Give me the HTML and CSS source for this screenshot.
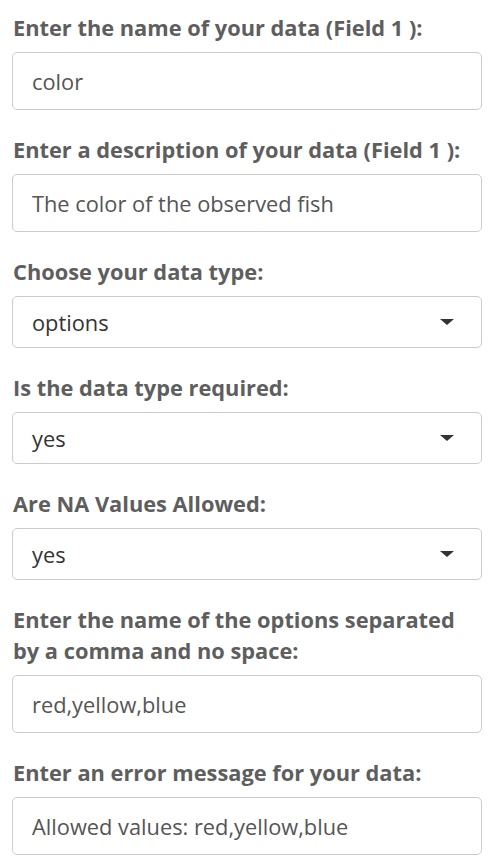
FILE: index.html
```html
<!DOCTYPE html>
<html>
<head>
<meta charset="utf-8">
<link rel="stylesheet" href="styles.css">
</head>
<body>
<div class="form">
  <div class="group">
    <label class="label">Enter the name of your data (Field 1 ):</label>
    <div class="input">color</div>
  </div>
  <div class="group">
    <label class="label">Enter a description of your data (Field 1 ):</label>
    <div class="input">The color of the observed fish</div>
  </div>
  <div class="group">
    <label class="label">Choose your data type:</label>
    <div class="select"><span>options</span><span class="caret"></span></div>
  </div>
  <div class="group">
    <label class="label">Is the data type required:</label>
    <div class="select"><span>yes</span><span class="caret"></span></div>
  </div>
  <div class="group">
    <label class="label">Are NA Values Allowed:</label>
    <div class="select"><span>yes</span><span class="caret"></span></div>
  </div>
  <div class="group">
    <label class="label">Enter the name of the options separated by a comma and no space:</label>
    <div class="input">red,yellow,blue</div>
  </div>
  <div class="group">
    <label class="label">Enter an error message for your data:</label>
    <div class="input">Allowed values: red,yellow,blue</div>
  </div>
</div>
</body>
</html>
```
FILE: styles.css
```css
html, body {
  margin: 0;
  padding: 0;
  background: #fff;
}
body {
  font-family: "Open Sans", "Liberation Sans", sans-serif;
}
.form {
  width: 470px;
  margin-left: 12px;
  padding-top: 12px;
  display: flex;
  flex-direction: column;
  gap: 24px;
}
.group {
  display: flex;
  flex-direction: column;
}
.label {
  font-size: 21.8px;
  font-weight: 700;
  line-height: 31px;
  color: #5e5e5e;
  margin-bottom: 9px;
  padding-left: 1px;
}
.input, .select {
  box-sizing: border-box;
  border: 1px solid #cccccc;
  border-radius: 5px;
  font-size: 21.8px;
  padding-left: 19px;
  display: flex;
  align-items: center;
}
.input {
  height: 58px;
  color: #555555;
}
.select {
  height: 52px;
  color: #333333;
  justify-content: space-between;
  padding-right: 27px;
}
.caret {
  width: 0;
  height: 0;
  border-left: 7px solid transparent;
  border-right: 7px solid transparent;
  border-top: 6px solid #333;
}
```
